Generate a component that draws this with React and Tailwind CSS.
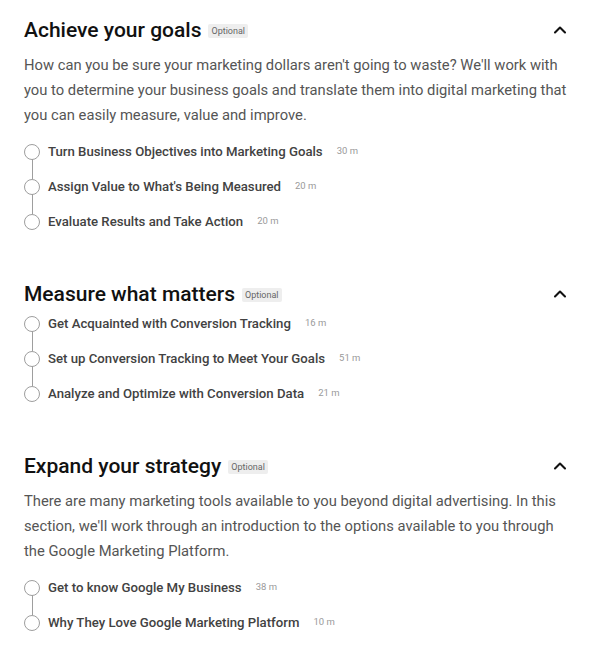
import { ChevronUp } from "lucide-react"

const sections = [
  {
    title: "Achieve your goals",
    description:
      "How can you be sure your marketing dollars aren't going to waste? We'll work with you to determine your business goals and translate them into digital marketing that you can easily measure, value and improve.",
    lessons: [
      { name: "Turn Business Objectives into Marketing Goals", time: "30 m" },
      { name: "Assign Value to What's Being Measured", time: "20 m" },
      { name: "Evaluate Results and Take Action", time: "20 m" },
    ],
  },
  {
    title: "Measure what matters",
    description: "",
    lessons: [
      { name: "Get Acquainted with Conversion Tracking", time: "16 m" },
      { name: "Set up Conversion Tracking to Meet Your Goals", time: "51 m" },
      { name: "Analyze and Optimize with Conversion Data", time: "21 m" },
    ],
  },
  {
    title: "Expand your strategy",
    description:
      "There are many marketing tools available to you beyond digital advertising. In this section, we'll work through an introduction to the options available to you through the Google Marketing Platform.",
    lessons: [
      { name: "Get to know Google My Business", time: "38 m" },
      { name: "Why They Love Google Marketing Platform", time: "10 m" },
    ],
  },
]

function Lesson({ lesson, first, last }) {
  return (
    <li className="relative flex h-[35px] items-center">
      {!first && <span className="absolute left-[7.5px] top-0 h-[10px] w-px bg-[#9e9e9e]" />}
      {!last && <span className="absolute left-[7.5px] bottom-0 h-[10px] w-px bg-[#9e9e9e]" />}
      <span className="h-4 w-4 shrink-0 rounded-full border border-[#9e9e9e] bg-white" />
      <span className="ml-2 text-[13.2px] font-medium text-[#424242]">{lesson.name}</span>
      <span className="ml-[14px] text-[9.5px] text-[#9a9a9a]">{lesson.time}</span>
    </li>
  )
}

function Section({ section }) {
  return (
    <section className="pb-[37px]">
      <div className="flex h-[36px] items-center justify-between pr-[30px]">
        <div className="flex items-center">
          <h2 className="text-[21px] font-medium leading-none text-[#111]">{section.title}</h2>
          <span className="ml-[7px] mt-[2px] rounded-[2px] bg-[#eeeeee] px-[3px] py-[2px] text-[9px] leading-[10px] text-[#666]">
            Optional
          </span>
        </div>
        <ChevronUp size={20} strokeWidth={2.5} className="text-[#111]" />
      </div>
      {section.description ? (
        <p className="mt-[5px] mb-[6px] max-w-[550px] text-[14.75px] leading-[25px] text-[#555]">
          {section.description}
        </p>
      ) : (
        <div className="-mt-[6px]" />
      )}
      <ul>
        {section.lessons.map((lesson, i) => (
          <Lesson
            key={lesson.name}
            lesson={lesson}
            first={i === 0}
            last={i === section.lessons.length - 1}
          />
        ))}
      </ul>
    </section>
  )
}

export default function App() {
  return (
    <div className="min-h-[651px] bg-white pl-6 pt-[12px] font-['Roboto',sans-serif]">
      {sections.map((s) => (
        <Section key={s.title} section={s} />
      ))}
    </div>
  )
}
